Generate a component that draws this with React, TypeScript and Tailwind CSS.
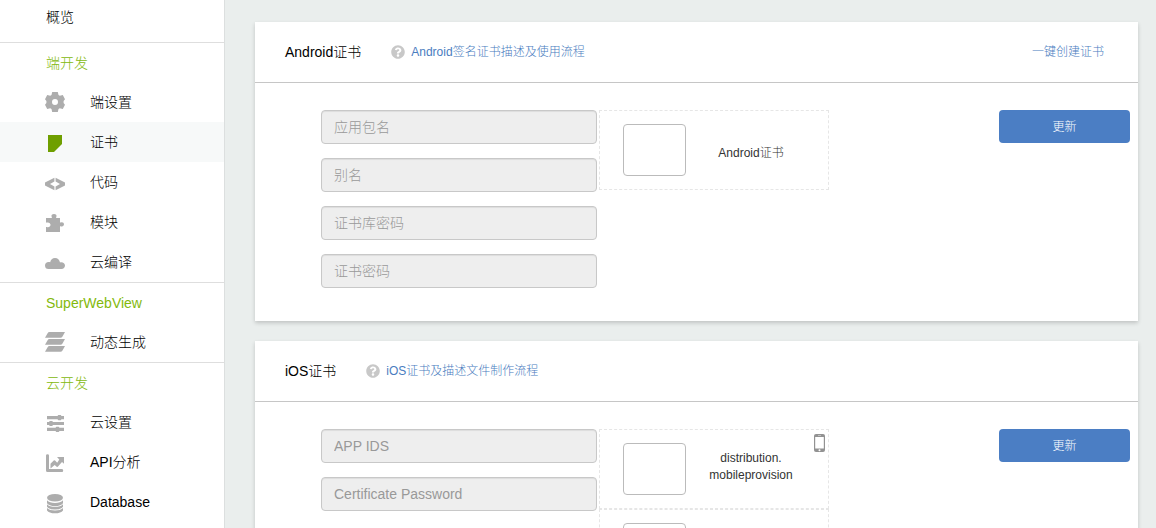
import type { ReactNode } from "react";
import { FaQuestionCircle } from "react-icons/fa";

const icons: Record<string, ReactNode> = {
  gear: (
    <path
      fillRule="evenodd"
      d="M7.200 0h5.600l.7 3 1.300.8 3-.9L20 7.200 18.600 9v2l1.400 1.800-2.200 4.300-3-.9-1.300.8-.7 3H7.200l-.7-3-1.300-.8-3 .9L0 12.800 1.400 11V9L0 7.200l2.200-4.300 3 .9L6.500 3zM10 7a3 3 0 1 0 0 6 3 3 0 0 0 0-6z"
    />
  ),
  cert: <path d="M3 3h14v9l-8 8H3z" />,
  code: (
    <path d="M9.400 5.700v3.700L5 12l4.400 2.600v3.700L0 13.500v-3zM10.600 5.700v3.700L15 12l-4.400 2.600v3.700l9.400-4.800v-3z" />
  ),
  puzzle: (
    <path d="M1 6h5.500c.5 0 .5-.4.200-1C5.800 3.300 7.200 2 9 2s3.200 1.300 2.300 3c-.3.600-.3 1 .2 1H15v4c0 .5.400.6 1 .4 1.700-.6 3 .5 3 1.900s-1.300 2.700-3 2.100c-.6-.2-1-.1-1 .4V20H1v-4.700c0-.4.300-.5.800-.3 2 .7 3.700-.5 3.700-2.200S3.800 10 1.800 10.600c-.5.200-.8.100-.8-.3z" />
  ),
  cloud: (
    <path d="M3.700 17A3.600 3.600 0 0 1 0 13.500C0 11.500 1.500 10 3.500 10c.7 0 1.200 0 1.700.2C5.600 7.800 7.400 6 10 6c2.700 0 4.600 1.800 5 4.500.4-.2.800-.2 1.300-.2 2.100 0 3.700 1.400 3.700 3.300S18.500 17 16.500 17z" />
  ),
  layers: (
    <path d="M4.500 0H20l-2.500 4.500q-.8 1.300-2 1.300H0l2.600-4.600Q3.200 0 4.500 0zM4.500 7H20l-2.500 4.500q-.8 1.300-2 1.300H0l2.600-4.600Q3.200 7 4.500 7zM4.500 14H20l-2.500 4.500q-.8 1.300-2 1.300H0l2.600-4.600Q3.200 14 4.500 14z" />
  ),
  sliders: (
    <path d="M2 4h10.500l.8-1h2.400l.8 1H19v3.200h-2.500l-.8 1h-2.400l-.8-1H2zM2 9.900h2l.8-1h2.400l.8 1h11v3.200H8l-.8 1H4.800l-.8-1H2zM2 15.800h8.500l.8-1h2.400l.8 1H19V19h-4.500l-.8 1h-2.400l-.8-1H2z" />
  ),
  chart: (
    <>
      <path d="M1 3.500q0-1.300 1.500-1.300T4 3.500V17h13q1.200 0 1.200 1.500T17 20H2.500Q1 20 1 18.500z" />
      <path d="M12 5h7v6.700l-2-1.700-4 4.600q-.7.700-1.300.1L9.700 12.900l-4.200 3.500v-4.700l3.200-3.100q.7-.6 1.400 0l2.100 2.100L14.300 7.500z" />
    </>
  ),
  database: (
    <>
      <ellipse cx="10" cy="5.800" rx="8" ry="3.800" />
      <path d="M2 8.200q2.500 2.700 8 2.700t8-2.700v3q-2 2.800-8 2.800t-8-2.800z" />
      <path d="M2 12.200q2.500 2.600 8 2.600t8-2.600v2.600q-2 2.800-8 2.800t-8-2.800z" />
      <path d="M2 16q2.500 2.500 8 2.500t8-2.500v2.400q-2 2.800-8 2.800t-8-2.800z" />
    </>
  ),
};

type Item = { icon: string; label: string; active?: boolean };

const groups: { title: string; items: Item[] }[] = [
  {
    title: "端开发",
    items: [
      { icon: "gear", label: "端设置" },
      { icon: "cert", label: "证书", active: true },
      { icon: "code", label: "代码" },
      { icon: "puzzle", label: "模块" },
      { icon: "cloud", label: "云编译" },
    ],
  },
  { title: "SuperWebView", items: [{ icon: "layers", label: "动态生成" }] },
  {
    title: "云开发",
    items: [
      { icon: "sliders", label: "云设置" },
      { icon: "chart", label: "API分析" },
      { icon: "database", label: "Database" },
    ],
  },
];

function Sidebar() {
  return (
    <nav className="w-[225px] shrink-0 border-r border-[#dcdfdf] bg-white text-sm text-black">
      <a href="#overview" className="flex h-[42px] items-start pt-[7px] pl-[46px]">
        概览
      </a>
      {groups.map((group) => (
        <section key={group.title}>
          <h2 className="flex h-10 items-center border-t border-[#dedede] pl-[46px] font-light text-[#83b90c]">
            {group.title}
          </h2>
          <ul>
            {group.items.map((item) => (
              <li key={item.label}>
                <a
                  href={"#" + item.icon}
                  className={
                    "flex h-10 items-center gap-[25px] pl-[45px] " + (item.active ? "bg-[#f7f9f9]" : "")
                  }
                >
                  <svg
                    viewBox="0 0 20 20"
                    aria-hidden="true"
                    className={
                      "size-5 overflow-visible " + (item.active ? "fill-[#6f9f00]" : "fill-[#adadad]")
                    }
                  >
                    {icons[item.icon]}
                  </svg>
                  {item.label}
                </a>
              </li>
            ))}
          </ul>
        </section>
      ))}
    </nav>
  );
}

function PhoneIcon() {
  return (
    <svg viewBox="0 0 11 18" aria-hidden="true" className="absolute top-1 right-[3px] h-[18px] w-[11px]">
      <rect width="11" height="18" rx="2" fill="#929292" />
      <rect x="1.200" y="3" width="8.600" height="11.500" fill="#fff" />
      <rect x="4" y="1.200" width="3" height="0.800" fill="#ccc" />
      <circle cx="5.500" cy="16.200" r="1" fill="#fff" />
    </svg>
  );
}

function Upload({ phone, labelClass, children }: { phone?: boolean; labelClass: string; children?: ReactNode }) {
  return (
    <div className="relative flex h-20 items-start border border-dashed border-[#e6e6e6] pr-[12px] pl-[23px]">
      <div className="mt-[13px] h-[52px] w-[63px] shrink-0 rounded border border-[#bbb] bg-white" />
      <p className={"flex-1 text-center text-xs leading-[17px] text-[#333] " + labelClass}>{children}</p>
      {phone && <PhoneIcon />}
    </div>
  );
}

function Card({
  title,
  help,
  action,
  fields,
  children,
}: {
  title: string;
  help: string;
  action?: string;
  fields: string[];
  children: ReactNode;
}) {
  return (
    <section className="bg-white shadow-[0_2px_4px_rgba(0,0,0,0.18)]">
      <header className="flex h-[61px] items-center border-b border-[#c6c6c6] px-[30px] text-xs text-[#4a7dc0]">
        <h2 className="text-sm text-black">{title}</h2>
        <FaQuestionCircle aria-hidden="true" className="ml-[30px] size-[14px] text-[#c8c8c8]" />
        <a href="#help" className="ml-[6px]">
          {help}
        </a>
        {action && (
          <a href="#create" className="mr-1 ml-auto">
            {action}
          </a>
        )}
      </header>
      <div className="flex items-start pt-[27px] pr-2 pb-[33px] pl-[66px]">
        <div className="flex w-[276px] flex-col gap-[14px]">
          {fields.map((field) => (
            <input
              key={field}
              type="text"
              disabled
              aria-label={field}
              placeholder={field}
              className="h-[34px] w-full rounded border border-[#c8c8c8] bg-[#eee] px-3 text-sm shadow-[inset_0_1px_1px_rgba(0,0,0,0.075)] placeholder:text-[#999]"
            />
          ))}
        </div>
        <div className="ml-[2px] w-[230px]">{children}</div>
        <button type="button" className="ml-auto h-[33px] w-[131px] rounded bg-[#4b7ec4] text-xs text-white">
          更新
        </button>
      </div>
    </section>
  );
}

export default function App() {
  return (
    <div className="flex h-screen overflow-hidden bg-[#eaeeed] font-['Liberation_Sans','Noto_Sans_CJK_SC',sans-serif] font-light">
      <Sidebar />
      <main className="flex min-w-0 flex-1 flex-col gap-5 pt-[22px] pr-[18px] pl-[30px]">
        <Card
          title="Android证书"
          help="Android签名证书描述及使用流程"
          action="一键创建证书"
          fields={["应用包名", "别名", "证书库密码", "证书密码"]}
        >
          <Upload labelClass="pt-[34px]">Android证书</Upload>
        </Card>
        <Card title="iOS证书" help="iOS证书及描述文件制作流程" fields={["APP IDS", "Certificate Password"]}>
          <Upload phone labelClass="pt-[20px]">
            distribution.
            <br />
            mobileprovision
          </Upload>
          <Upload labelClass="pt-[20px]" />
        </Card>
      </main>
    </div>
  );
}
